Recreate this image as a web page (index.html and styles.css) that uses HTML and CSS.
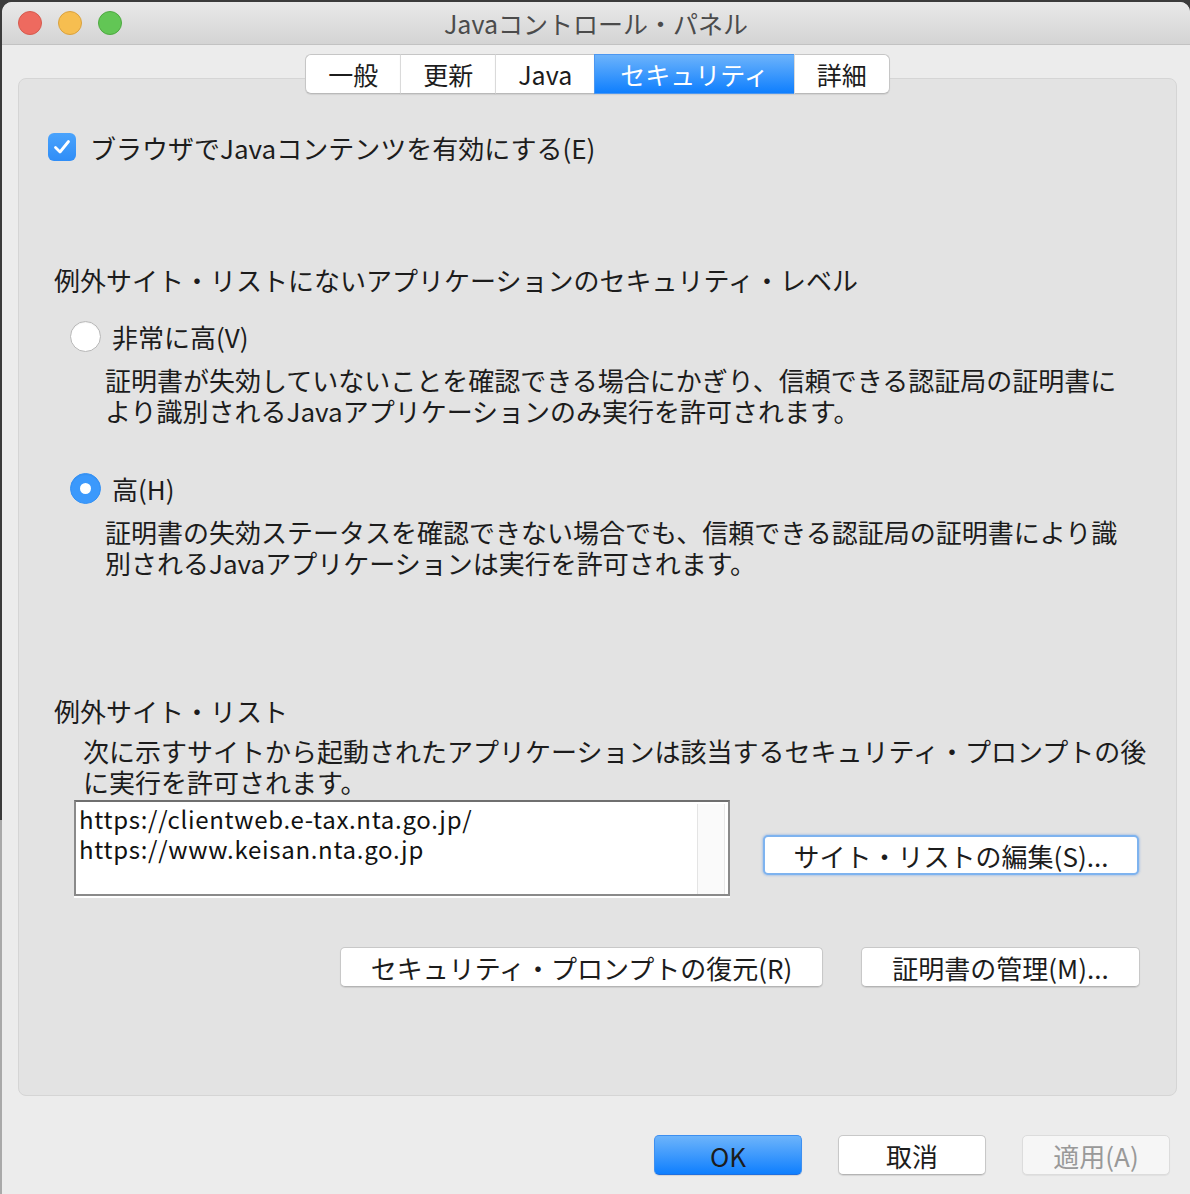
FILE: index.html
```html
<!DOCTYPE html>
<html lang="ja">
<head>
    <meta charset="UTF-8">
    <title>Javaコントロール・パネル</title>
    <link rel="stylesheet" href="styles.css">
</head>
<body>
    <div class="window">
        <div class="titlebar">
            <div class="lights">
                <span class="light red"></span>
                <span class="light yellow"></span>
                <span class="light green"></span>
            </div>
            <div class="title">Javaコントロール・パネル</div>
        </div>

        <div class="window-body">
            <div class="tabs">
                <div class="tab">一般</div>
                <div class="tab">更新</div>
                <div class="tab">Java</div>
                <div class="tab active">セキュリティ</div>
                <div class="tab">詳細</div>
            </div>

            <div class="panel">
                <label class="check-row">
                    <span class="checkbox">
                        <svg width="18" height="16" viewBox="0 0 18 16"><path d="M2.5 8.5 L7 13 L15.5 2.5" fill="none" stroke="#fff" stroke-width="2.8" stroke-linecap="round" stroke-linejoin="round"/></svg>
                    </span>
                    ブラウザでJavaコンテンツを有効にする(E)
                </label>

                <div class="heading first">例外サイト・リストにないアプリケーションのセキュリティ・レベル</div>

                <label class="radio-row">
                    <span class="radio"></span>
                    非常に高(V)
                </label>
                <p class="desc">証明書が失効していないことを確認できる場合にかぎり、信頼できる認証局の証明書に<br>より識別されるJavaアプリケーションのみ実行を許可されます。</p>

                <label class="radio-row second">
                    <span class="radio checked"></span>
                    高(H)
                </label>
                <p class="desc">証明書の失効ステータスを確認できない場合でも、信頼できる認証局の証明書により識<br>別されるJavaアプリケーションは実行を許可されます。</p>

                <div class="heading second">例外サイト・リスト</div>
                <p class="desc list-desc">次に示すサイトから起動されたアプリケーションは該当するセキュリティ・プロンプトの後<br>に実行を許可されます。</p>

                <div class="list-row">
                    <div class="site-list">
                        <div class="site-items">
                            <div>https://clientweb.e-tax.nta.go.jp/</div>
                            <div>https://www.keisan.nta.go.jp</div>
                        </div>
                        <div class="scroll-strip"></div>
                    </div>
                    <button class="btn focus edit-btn">サイト・リストの編集(S)...</button>
                </div>

                <div class="btn-row">
                    <button class="btn restore-btn">セキュリティ・プロンプトの復元(R)</button>
                    <button class="btn cert-btn">証明書の管理(M)...</button>
                </div>
            </div>

            <div class="footer">
                <button class="btn primary">OK</button>
                <button class="btn">取消</button>
                <button class="btn disabled">適用(A)</button>
            </div>
        </div>
    </div>
</body>
</html>
```

FILE: styles.css
```css
body {
    margin: 0;
    padding: 0;
    height: 1194px;
    overflow: hidden;
    background: linear-gradient(#3b3b3b 0, #3b3b3b 820px, #a9a9a9 820px);
    font-family: "Noto Sans CJK JP", sans-serif;
    color: #1c1c1c;
}

.window {
    margin: 2px 0 0 2px;
    width: 1188px;
    height: 1192px;
    background: #ececec;
    border-radius: 10px 10px 0 0;
    overflow: hidden;
}

.titlebar {
    height: 42px;
    background: linear-gradient(#e9e9e9, #d4d4d4);
    border-bottom: 1px solid #c2c2c2;
    display: flex;
    align-items: center;
    position: relative;
}

.lights {
    display: flex;
    gap: 16px;
    padding-left: 16px;
}

.light {
    width: 22px;
    height: 22px;
    border-radius: 50%;
    border: 1px solid;
}

.red { background: #ee6a5f; border-color: #d55a4e; }
.yellow { background: #f6be50; border-color: #d9a13f; }
.green { background: #62c655; border-color: #4ea841; }

.title {
    position: absolute;
    left: 0;
    right: 0;
    text-align: center;
    font-size: 25px;
    line-height: 42px;
    color: #4b4b4b;
    pointer-events: none;
}

.window-body {
    padding: 9px 13px 0 16px;
}

.tabs {
    display: flex;
    justify-content: center;
    position: relative;
    z-index: 1;
    margin-bottom: -16px;
}

.tab {
    height: 38px;
    line-height: 38px;
    padding: 0 22px;
    font-size: 25px;
    background: #fff;
    border-top: 1px solid #c6c6c6;
    border-bottom: 1px solid #b9b9b9;
    border-left: 1px solid #dadada;
    box-shadow: 0 1px 1px rgba(0, 0, 0, 0.08);
}

.tab:first-child {
    border-left: 1px solid #c6c6c6;
    border-radius: 6px 0 0 6px;
}

.tab:last-child {
    border-right: 1px solid #c6c6c6;
    border-radius: 0 6px 6px 0;
}

.tab.active {
    background: linear-gradient(#6cb3fb, #0f7ffe);
    color: #fff;
    border-color: #4c97f0;
    padding: 0 25px;
}

.panel {
    background: #e3e3e3;
    border: 1px solid #d5d5d5;
    border-radius: 8px;
    padding: 53px 20px 108px 0;
    font-size: 26px;
}

.check-row {
    display: flex;
    align-items: center;
    height: 30px;
    margin-left: 29px;
    gap: 14px;
}

.checkbox {
    width: 28px;
    height: 28px;
    border-radius: 6px;
    background: linear-gradient(#4aa3fc, #2f8df7);
    display: flex;
    align-items: center;
    justify-content: center;
}

.heading {
    line-height: 31px;
    margin-left: 35px;
}

.heading.first { margin-top: 102px; }
.heading.second { margin-top: 117px; }

.radio-row {
    display: flex;
    align-items: center;
    height: 31px;
    margin: 26px 0 0 51px;
    gap: 11px;
}

.radio-row.second { margin-top: 47px; }

.radio {
    width: 29px;
    height: 29px;
    border-radius: 50%;
    background: #fff;
    border: 1px solid #b8b8b8;
    box-shadow: inset 0 1px 1px rgba(0, 0, 0, 0.05);
    position: relative;
}

.radio.checked {
    background: #3b99fc;
    border-color: #3491f5;
}

.radio.checked::after {
    content: "";
    position: absolute;
    left: 9px;
    top: 9px;
    width: 11px;
    height: 11px;
    border-radius: 50%;
    background: #fff;
}

.desc {
    margin: 12px 0 0 86px;
    line-height: 31px;
}

.desc.list-desc {
    margin: 9px 0 0 64px;
}

.list-row {
    display: flex;
    align-items: flex-start;
    margin: 3px 0 0 55px;
}

.site-list {
    width: 652px;
    height: 92px;
    background: #fff;
    border: 2px solid #8a8a8a;
    border-top-color: #6f6f6f;
    display: flex;
    box-shadow: 0 2px 0 #fff;
}

.site-items {
    flex: 1;
    padding: 2px 3px;
    font-size: 24px;
    line-height: 30px;
    letter-spacing: 0.7px;
    color: #111;
}

.scroll-strip {
    width: 26px;
    margin: 2px 3px 0 0;
    background: #fafafa;
    border-left: 1px solid #e4e4e4;
    border-right: 1px solid #e8e8e8;
}

.btn {
    font-family: "Noto Sans CJK JP", sans-serif;
    font-size: 26px;
    color: #1c1c1c;
    height: 40px;
    padding: 0;
    background: #fff;
    border: 1px solid #c8c8c8;
    border-bottom-color: #b4b4b4;
    border-radius: 5px;
    box-shadow: 0 1px 1px rgba(0, 0, 0, 0.1);
    cursor: pointer;
}

.edit-btn {
    width: 376px;
    margin: 35px 0 0 33px;
    border: 2px solid #7eb3ef;
    box-shadow: 0 0 2px 1px rgba(90, 150, 230, 0.35);
}

.btn-row {
    display: flex;
    margin-top: 51px;
    padding-left: 321px;
    gap: 38px;
}

.restore-btn { width: 483px; }
.cert-btn { width: 279px; }

.footer {
    display: flex;
    justify-content: flex-end;
    gap: 36px;
    margin-top: 39px;
    padding-right: 7px;
}

.footer .btn {
    width: 148px;
}

.btn.primary {
    background: linear-gradient(#6db4fb, #0f7ffe);
    border-color: #3d8ff0;
    border-bottom-color: #1f6fe0;
}

.btn.disabled {
    background: #f6f6f6;
    color: #999;
    border-color: #dcdcdc;
    box-shadow: 0 1px 1px rgba(0, 0, 0, 0.05);
}
```
